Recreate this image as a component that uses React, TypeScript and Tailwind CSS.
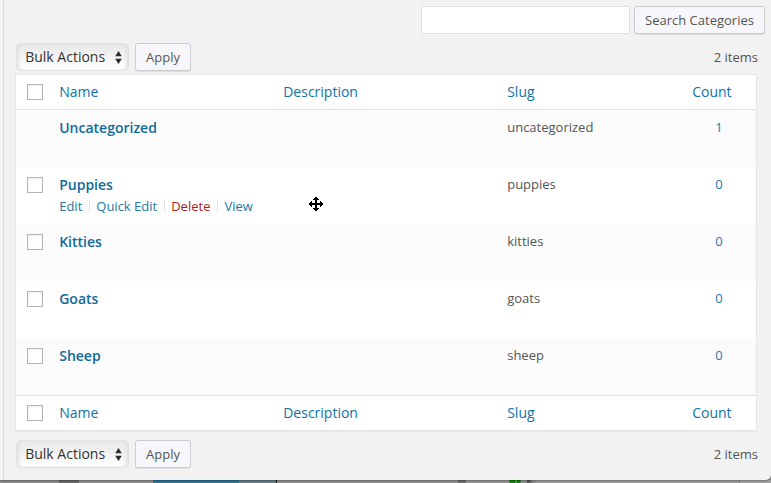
import React from "react";

type Category = { name: string; slug: string; count: number; selectable: boolean; actions?: boolean };

const categories: Category[] = [
  { name: "Uncategorized", slug: "uncategorized", count: 1, selectable: false },
  { name: "Puppies", slug: "puppies", count: 0, selectable: true, actions: true },
  { name: "Kitties", slug: "kitties", count: 0, selectable: true },
  { name: "Goats", slug: "goats", count: 0, selectable: true },
  { name: "Sheep", slug: "sheep", count: 0, selectable: true },
];

const columns = "grid grid-cols-[43.2px_224px_224px_185px_63.8px]";

function Checkbox() {
  return <span className="block size-4 border border-[#b4b4b8] bg-white shadow-[inset_0_1px_2px_rgba(0,0,0,0.07)]" />;
}

function Button({ children, className }: { children: React.ReactNode; className: string }) {
  return (
    <button
      className={`h-7 shrink-0 rounded-[3px] border border-[#cccccf] bg-[#f7f7fb] text-[13px] leading-[26px] whitespace-nowrap text-[#555] shadow-[0_1px_0_rgba(0,0,0,0.08)] ${className}`}
    >
      {children}
    </button>
  );
}

function BulkSelect() {
  return (
    <div className="flex h-7 w-[113px] items-center justify-between rounded-[5px] border border-[#e2e2e2] bg-linear-to-b from-[#e8e8e8] to-white pr-[6px] pl-[8.2px] text-[14px] text-[#333] shadow-[inset_3px_0_3px_-1px_#e2e2e2,inset_-3px_0_3px_-1px_#e2e2e2]">
      <span className="pb-[2px] whitespace-nowrap">Bulk Actions</span>
      <svg width="7" height="13" viewBox="0 0 7 13" fill="#2d2d2d">
        <path d="M3.5 0 6.8 5.2H.2zM3.5 13 .2 7.8h6.6z" />
      </svg>
    </div>
  );
}

function TableNav() {
  return (
    <div className="flex h-7 items-center pr-[13px] pl-4">
      <BulkSelect />
      <Button className="ml-[6px] w-14">Apply</Button>
      <span className="ml-auto pt-[2px] text-[13px] text-[#555]">2 items</span>
    </div>
  );
}

function HeadRow() {
  return (
    <div className={`${columns} h-[34px] items-center text-[14px] leading-[18px] text-[#0f73a6]`}>
      <div className="pl-[11px]"><Checkbox /></div>
      <span>Name</span>
      <span>Description</span>
      <span>Slug</span>
      <span>Count</span>
    </div>
  );
}

function Actions() {
  return (
    <div className="flex items-center text-[13px] leading-[18px] whitespace-nowrap text-[#2577a3]">
      <span>Edit</span>
      <span className="mx-[6.5px] h-3 w-px bg-[#e2e2e2]" />
      <span>Quick Edit</span>
      <span className="mx-[6.5px] h-3 w-px bg-[#e2e2e2]" />
      <span className="text-[#b01c1c]">Delete</span>
      <span className="mx-[6.5px] h-3 w-px bg-[#e2e2e2]" />
      <span>View</span>
    </div>
  );
}

export default function App() {
  return (
    <div className="relative flex h-[483px] w-[771px] flex-col overflow-hidden bg-[#929292] font-['Open_Sans','Noto_Sans',sans-serif]">
      <div className="z-10 h-[480px] shrink-0 rounded-br-[5px] bg-[#f2f2f2] shadow-[0_0_3px_rgba(0,0,0,0.7)]">
        <div className="ml-[3px] h-full border-l border-[#d8dadd]">
          <div className="-ml-1 flex h-full flex-col pt-1.5">
            <div className="flex h-7 justify-end gap-1 pr-1.5">
              <input className="h-7 w-[209px] border border-[#e0e0e0] bg-white" aria-label="Search Categories" />
              <Button className="w-[131px]">Search Categories</Button>
            </div>
            <div className="mt-[9px]"><TableNav /></div>
            <div className="mt-[3px] ml-[15px] w-[742px] border border-[#e5e5e5] bg-white shadow-[0_1px_1px_rgba(0,0,0,0.04)]">
              <HeadRow />
              <div className="border-t border-[#e1e1e1]">
                {categories.map((c, i) => (
                  <div key={c.name} className={`${columns} h-[57px] pt-[8px] ${i % 2 === 0 ? "bg-[#fbfbfb]" : "bg-white"}`}>
                    <div className="pt-[2px] pl-[11px]">{c.selectable && <Checkbox />}</div>
                    <div>
                      <div className="text-[14px] leading-[19px] font-semibold text-[#0f6a9c]">{c.name}</div>
                      {c.actions && <div className="mt-[3px]"><Actions /></div>}
                    </div>
                    <span />
                    <span className="text-[13px] leading-[18px] text-[#555]">{c.slug}</span>
                    <span className="pl-[23px] text-[13px] leading-[18px] text-[#1b78ad]">{c.count}</span>
                  </div>
                ))}
              </div>
              <div className="border-t border-[#e1e1e1]"><HeadRow /></div>
            </div>
            <div className="mt-[9px]"><TableNav /></div>
          </div>
        </div>
      </div>
      <div className="flex h-[3px] shrink-0">
        <span className="w-[59px] bg-[#8f8f8d]" />
        <span className="w-5 bg-[#6b6b69]" />
        <span className="w-[74px] bg-[#929290]" />
        <span className="w-[86px] bg-[#2f7796]" />
        <span className="w-[37px] bg-[#6b7f88]" />
        <span className="w-px bg-[#222]" />
        <span className="w-[181px] bg-[#929492]" />
        <span className="w-2 bg-[#707270]" />
        <span className="w-[43px] bg-[#979997]" />
        <svg width="26" height="3" viewBox="0 0 26 3">
          <path d="M0 0h12l-1 3H1z" fill="#12820f" />
          <path d="m6 2.5 2-1.5" stroke="#b5dcb3" strokeWidth=".8" />
          <path d="M18 0v3l6-1-4-2z" fill="#505250" />
        </svg>
        <span className="w-[204px] bg-[#a0a2a0]" />
        <span className="w-px bg-[#8a8a8a]" />
        <span className="flex-1 bg-[#a6a6a6]" />
      </div>
      <svg className="absolute top-[197px] left-[309px] z-20" width="14" height="14" viewBox="0 0 14 14" fill="#000" shapeRendering="crispEdges">
        <path d="M6 0h2v1h1v1h1v1H8v3h3V4h1v1h1v1h1v2h-1v1h-1v1h-1V8H8v3h2v1H9v1H8v1H6v-1H5v-1H4v-1h2V8H3v2H2V9H1V8H0V6h1V5h1V4h1v2h3V3H4V2h1V1h1z" />
      </svg>
    </div>
  );
}
